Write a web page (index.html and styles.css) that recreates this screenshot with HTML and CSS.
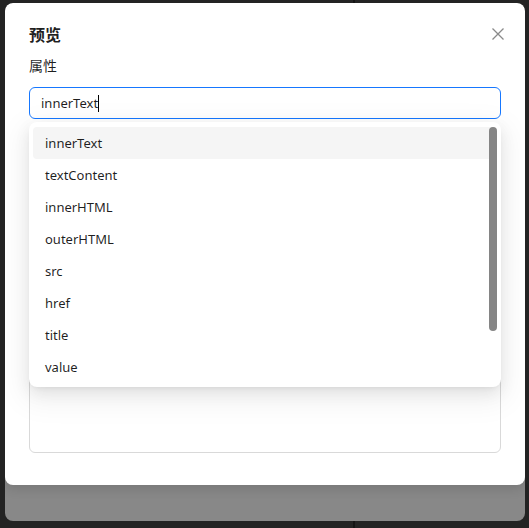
FILE: index.html
```html
<!DOCTYPE html>
<html lang="zh">
<head>
<meta charset="utf-8">
<link rel="stylesheet" href="styles.css">
</head>
<body>
<div class="window">
  <div class="modal">
    <button class="close" aria-label="关闭">
      <svg width="14" height="14" viewBox="0 0 14 14"><path d="M1.5 1.5L12.5 12.5M12.5 1.5L1.5 12.5" stroke="#8a8a8a" stroke-width="1.3" fill="none"/></svg>
    </button>
    <div class="title">预览</div>
    <div class="field">
      <label class="label">属性</label>
      <div class="select-wrap">
        <div class="input"><span>innerText</span><span class="caret"></span></div>
        <div class="dropdown">
          <div class="opt active">innerText</div>
          <div class="opt">textContent</div>
          <div class="opt">innerHTML</div>
          <div class="opt">outerHTML</div>
          <div class="opt">src</div>
          <div class="opt">href</div>
          <div class="opt">title</div>
          <div class="opt">value</div>
          <div class="scrollbar"></div>
        </div>
      </div>
    </div>
    <div class="field">
      <div class="label-space"></div>
      <div class="textarea"></div>
    </div>
  </div>
</div>
</body>
</html>
```
FILE: styles.css
```css
* { box-sizing: border-box; }
html, body { margin: 0; height: 100%; }
body {
  background: linear-gradient(to right, #232323 353px, #141414 353px, #141414 355px, #232323 355px);
  font-family: "Noto Sans", "Noto Sans CJK SC", sans-serif;
  font-size: 14px;
  color: rgba(0,0,0,0.88);
  padding: 3px 4px 7px 5px;
}
.window {
  height: 518px;
  background: #888;
  border-radius: 8px;
  overflow: hidden;
}
.modal {
  position: relative;
  height: 482px;
  background: #fff;
  border-radius: 8px;
  padding: 20px 24px 0 24px;
  box-shadow: 0 4px 12px rgba(0,0,0,0.12);
}
.close {
  position: absolute;
  top: 20px;
  right: 17px;
  width: 20px;
  height: 22px;
  border: 0;
  background: none;
  padding: 0;
  display: flex;
  align-items: center;
  justify-content: center;
}
.title {
  font-size: 16px;
  font-weight: 700;
  line-height: 24px;
  height: 24px;
  margin-bottom: 8px;
}
.field { display: flex; flex-direction: column; }
.label { line-height: 22px; padding-bottom: 10px; }
.label-space { height: 30px; }
.field + .field { margin-top: 23px; }
.select-wrap { position: relative; }
.input {
  height: 32px;
  border: 1px solid #1677ff;
  border-radius: 6px;
  padding: 0 11px;
  display: flex;
  align-items: center;
  line-height: 22px;
  font-size: 13px;
}
.caret {
  display: inline-block;
  width: 1px;
  height: 17px;
  background: #000;
}
.dropdown {
  position: absolute;
  top: 35px;
  left: 0;
  right: 0;
  z-index: 2;
  background: #fff;
  border-radius: 8px;
  padding: 5px 4px 4px;
  box-shadow: 0 6px 16px 0 rgba(0,0,0,0.08), 0 3px 6px -4px rgba(0,0,0,0.12), 0 9px 28px 8px rgba(0,0,0,0.05);
}
.opt {
  height: 32px;
  line-height: 32px;
  padding: 0 12px;
  border-radius: 4px;
  font-size: 13px;
}
.opt.active { background: #f5f5f5; }
.scrollbar {
  position: absolute;
  top: 5px;
  right: 4px;
  width: 8px;
  height: 204px;
  background: #858585;
  border-radius: 4px;
}
.textarea {
  height: 281px;
  border: 1px solid #d9d9d9;
  border-radius: 6px;
}
```
